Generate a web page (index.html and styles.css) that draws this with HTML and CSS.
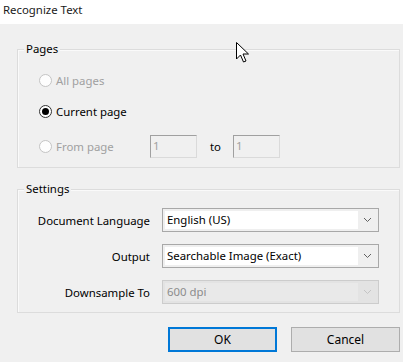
FILE: index.html
```html
<!DOCTYPE html>
<html lang="en">
<head>
    <meta charset="UTF-8">
    <title>Recognize Text</title>
    <link rel="stylesheet" href="styles.css">
</head>
<body>

    <div class="titlebar">Recognize Text</div>

    <div class="dialog">
        <div class="group pages-group">
            <div class="group-title">Pages</div>

            <div class="radio-row row-all">
                <span class="radio disabled"></span>
                <span class="radio-label disabled-text">All pages</span>
            </div>

            <div class="radio-row row-current">
                <span class="radio checked"></span>
                <span class="radio-label">Current page</span>
            </div>

            <div class="radio-row row-from">
                <div class="from-label">
                    <span class="radio disabled"></span>
                    <span class="radio-label disabled-text">From page</span>
                </div>
                <div class="page-input">1</div>
                <span class="to-label">to</span>
                <div class="page-input">1</div>
            </div>
        </div>

        <div class="group settings-group">
            <div class="group-title">Settings</div>

            <div class="field-row first">
                <span class="field-label">Document Language</span>
                <div class="combo">
                    <div class="combo-text">English (US)</div>
                    <div class="combo-arrow">
                        <svg width="9" height="6" viewBox="0 0 9 6"><polyline points="1,1 4.5,4.5 8,1" fill="none" stroke="#606060" stroke-width="1"/></svg>
                    </div>
                </div>
            </div>

            <div class="field-row">
                <span class="field-label">Output</span>
                <div class="combo">
                    <div class="combo-text">Searchable Image (Exact)</div>
                    <div class="combo-arrow">
                        <svg width="9" height="6" viewBox="0 0 9 6"><polyline points="1,1 4.5,4.5 8,1" fill="none" stroke="#606060" stroke-width="1"/></svg>
                    </div>
                </div>
            </div>

            <div class="field-row">
                <span class="field-label">Downsample To</span>
                <div class="combo disabled-combo">
                    <div class="combo-text">600 dpi</div>
                    <div class="combo-arrow">
                        <svg width="9" height="6" viewBox="0 0 9 6"><polyline points="1,1 4.5,4.5 8,1" fill="none" stroke="#c4c4c4" stroke-width="1"/></svg>
                    </div>
                </div>
            </div>
        </div>

        <div class="button-row">
            <button class="btn btn-default">OK</button>
            <button class="btn">Cancel</button>
        </div>
    </div>

    <!-- mouse pointer from the screenshot -->
    <svg class="cursor" width="14" height="21" viewBox="0 0 14 21">
        <path d="M0.5,0.5 L0.5,17 L4.5,13 L7.5,20 L10,19 L7,12 L12.5,12 Z" fill="#fff" stroke="#000" stroke-width="1" stroke-linejoin="round"/>
    </svg>

</body>
</html>
```

FILE: styles.css
```css
body {
    font-family: "Noto Sans", "Open Sans", sans-serif;
    font-size: 11.4px;
    margin: 0;
    padding: 0;
    background-color: #f0f0f0;
    color: #000;
    width: 403px;
    height: 362px;
    overflow: hidden;
}

.titlebar {
    height: 24px;
    line-height: 20px;
    padding-left: 3px;
    background-color: #fff;
    color: #1a1a1a;
}

.dialog {
    padding: 0 3px 0 17px;
}

/* group boxes */
.group {
    border: 1px solid #dcdcdc;
    box-shadow: inset 1px 1px 0 #fafafa;
}

.pages-group {
    margin-top: 25px;
    padding-bottom: 9px;
}

.settings-group {
    margin-top: 21px;
    padding-bottom: 8px;
}

.group-title {
    width: fit-content;
    margin: -9px 0 0 6px;
    padding: 0 2px;
    line-height: 16px;
    background-color: #f0f0f0;
}

/* radios */
.radio-row {
    display: flex;
    align-items: center;
    padding-left: 21px;
}

.row-all {
    height: 22px;
    margin-top: 12px;
}

.row-current {
    height: 22px;
    margin-top: 9px;
}

.row-from {
    height: 23px;
    margin-top: 13px;
}

.from-label {
    display: flex;
    align-items: center;
    width: 111px;
}

.radio {
    box-sizing: border-box;
    width: 13px;
    height: 13px;
    border-radius: 50%;
    border: 1px solid #333;
    background-color: #fff;
    margin-right: 4px;
    display: flex;
    justify-content: center;
    align-items: center;
}

.radio.disabled {
    border-color: #c4c4c4;
    background-color: #fdfdfd;
}

.radio.checked::after {
    content: "";
    width: 7px;
    height: 7px;
    border-radius: 50%;
    background-color: #000;
}

.disabled-text {
    color: #a0a0a0;
}

.page-input {
    box-sizing: border-box;
    width: 47px;
    height: 23px;
    border: 1px solid #dadada;
    border-top-color: #a0a0a0;
    border-left-color: #a0a0a0;
    padding-left: 2px;
    line-height: 19px;
    color: #a0a0a0;
    background-color: #f0f0f0;
}

.to-label {
    margin: 0 12px 0 13px;
}

/* combo rows */
.field-row {
    display: grid;
    grid-template-columns: 132px 217px;
    column-gap: 12px;
    align-items: center;
    height: 24px;
    margin-top: 12px;
}

.field-row.first {
    margin-top: 11px;
}

.field-label {
    text-align: right;
    color: #000;
}

.combo {
    box-sizing: border-box;
    height: 24px;
    border: 1px solid #a8a8a8;
    background-color: #efefef;
    padding: 2px;
    display: flex;
}

.combo-text {
    flex-grow: 1;
    background-color: #fff;
    padding-left: 2px;
    line-height: 18px;
}

.combo-arrow {
    width: 18px;
    display: flex;
    justify-content: center;
    align-items: center;
}

.disabled-combo {
    border-color: #cccccc;
    background-color: #e3e3e3;
}

.disabled-combo .combo-text {
    background-color: #e9e9e9;
    color: #8c8c8c;
}

/* buttons */
.button-row {
    display: flex;
    justify-content: flex-end;
    gap: 14px;
    margin-top: 14px;
}

.btn {
    box-sizing: border-box;
    width: 109px;
    height: 25px;
    font-family: inherit;
    font-size: 12px;
    color: #000;
    background-color: #e1e1e1;
    border: 1px solid #adadad;
    padding: 0;
}

.btn-default {
    border: 2px solid #0078d7;
}

.cursor {
    position: absolute;
    left: 236px;
    top: 42px;
}
```
